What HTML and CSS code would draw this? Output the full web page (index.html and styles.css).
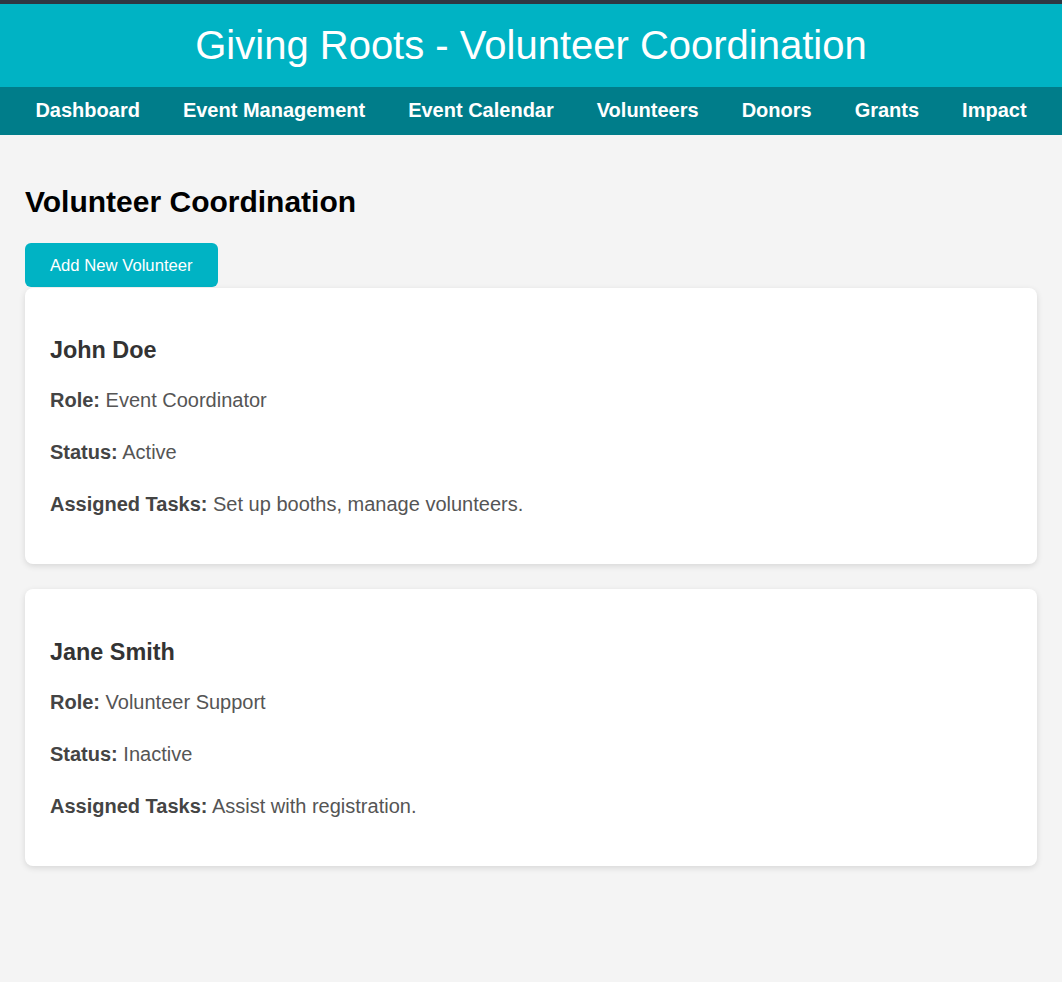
FILE: index.html
```html
<!DOCTYPE html>
<html lang="en">
<head>
<meta charset="utf-8">
<title>Giving Roots - Volunteer Coordination</title>
<link rel="stylesheet" href="styles.css">
</head>
<body>
<header class="site-header">
  <h1 class="site-title">Giving Roots - Volunteer Coordination</h1>
</header>
<nav class="main-nav">
  <a href="#" class="nav-link">Dashboard</a>
  <a href="#" class="nav-link">Event Management</a>
  <a href="#" class="nav-link">Event Calendar</a>
  <a href="#" class="nav-link">Volunteers</a>
  <a href="#" class="nav-link">Donors</a>
  <a href="#" class="nav-link">Grants</a>
  <a href="#" class="nav-link">Impact</a>
</nav>
<main class="content">
  <h2 class="page-title">Volunteer Coordination</h2>
  <button class="btn-add">Add New Volunteer</button>
  <section class="card">
    <h3 class="card-name">John Doe</h3>
    <p class="card-line"><strong>Role:</strong> Event Coordinator</p>
    <p class="card-line"><strong>Status:</strong> Active</p>
    <p class="card-line"><strong>Assigned Tasks:</strong> Set up booths, manage volunteers.</p>
  </section>
  <section class="card">
    <h3 class="card-name">Jane Smith</h3>
    <p class="card-line"><strong>Role:</strong> Volunteer Support</p>
    <p class="card-line"><strong>Status:</strong> Inactive</p>
    <p class="card-line"><strong>Assigned Tasks:</strong> Assist with registration.</p>
  </section>
</main>
</body>
</html>
```
FILE: styles.css
```css
html, body {
  margin: 0;
  padding: 0;
}
body {
  font-family: "Liberation Sans", Arial, sans-serif;
  background: #f4f4f4;
  color: #333;
  border-top: 4px solid #2f3742;
  min-height: 978px;
}
.site-header {
  background: #00b3c4;
  color: #fff;
  text-align: center;
  padding: 18px 20px 19px;
}
.site-title {
  margin: 0;
  font-size: 40px;
  font-weight: normal;
  line-height: 46px;
}
.main-nav {
  background: #007d8a;
  display: flex;
  justify-content: center;
  gap: 43px;
  padding: 7px 0 9px;
}
.nav-link {
  color: #fff;
  text-decoration: none;
  font-weight: bold;
  font-size: 20px;
  line-height: 32px;
}
.content {
  padding: 25px;
}
.page-title {
  font-size: 30px;
  color: #000;
  margin: 25px 0 24px;
  line-height: 34px;
}
.btn-add {
  display: block;
  background: #00b3c4;
  color: #fff;
  border: none;
  border-radius: 6px;
  font-family: "Liberation Sans", Arial, sans-serif;
  font-size: 16.67px;
  line-height: 19px;
  padding: 12.5px 25px;
  margin-bottom: 1px;
  cursor: pointer;
}
.card {
  background: #fff;
  border-radius: 8px;
  box-shadow: 0 2px 6px rgba(0, 0, 0, 0.12);
  padding: 26px 25px 24px;
  margin-bottom: 25px;
}
.card-name {
  font-size: 23.4px;
  line-height: 27px;
  margin: 23.4px 0 20px;
  color: #333;
}
.card-line {
  font-size: 20px;
  line-height: 32px;
  margin: 20px 0;
  color: #555;
}
.card-line strong {
  color: #444;
}
```
